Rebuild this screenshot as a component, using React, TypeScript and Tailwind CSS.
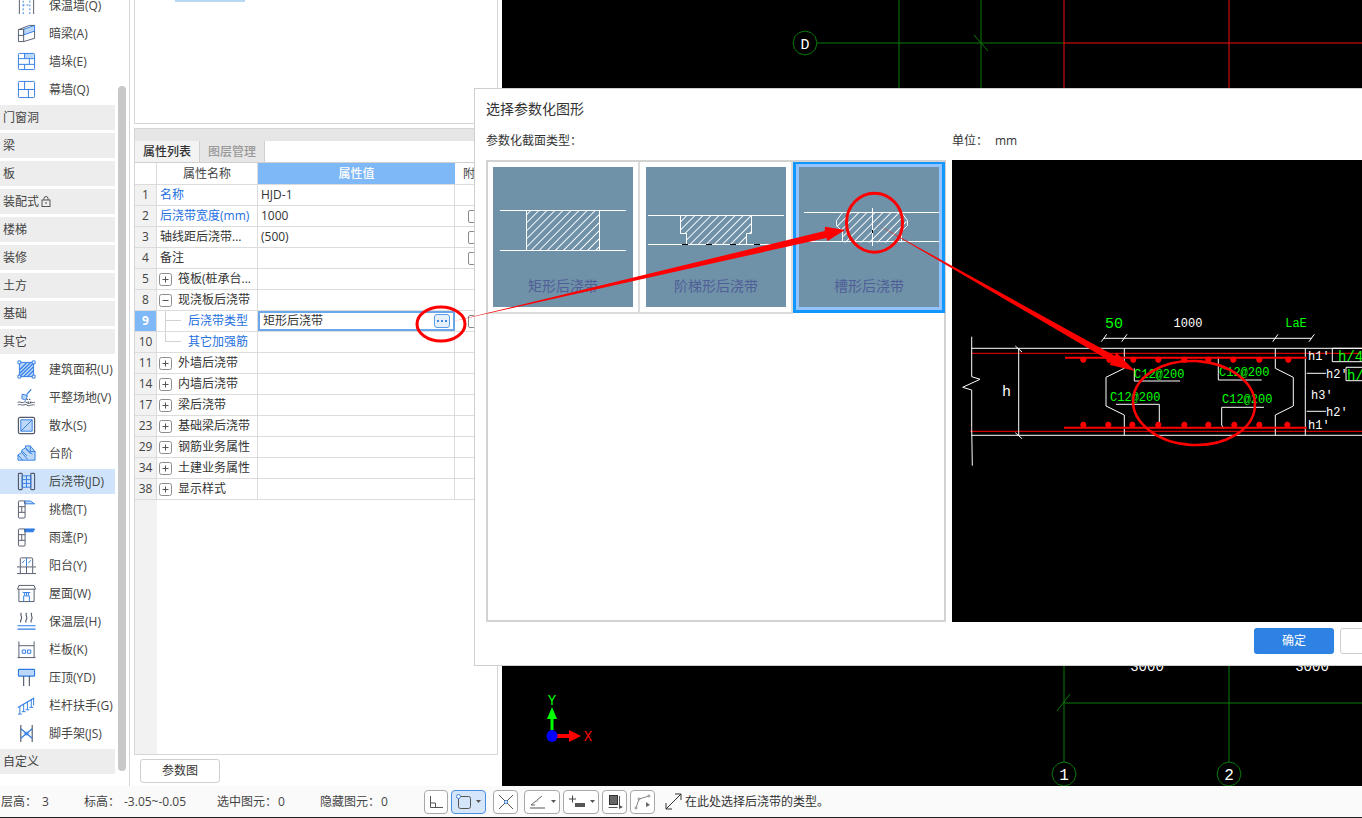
import React from 'react';

const B = '#2f7be5';
const S = '#525a6b';
const L = '#bcd8f8';

const Svg = ({ children }: { children: React.ReactNode }) => (
  <svg width="19" height="19" viewBox="0 0 20 20" fill="none" strokeWidth="1" className="shrink-0">
    {children}
  </svg>
);

const icons: Record<string, React.ReactNode> = {
  wall: (
    <Svg>
      <path d="M2.5 1v18M17.5 1v18" stroke={S} />
      <path d="M6.5 1v18M13.5 1v18" stroke={B} strokeDasharray="2 2" />
      <path d="M6 9.5h8" stroke={B} strokeDasharray="2 2" />
    </Svg>
  ),
  beam: (
    <Svg>
      <path d="M7 5.5 18.5 1.5v6L7 11.5z" fill={L} stroke={B} />
      <path d="M1.5 6 7 5.5M1.5 6v12.5H7l11.5-3.5V7.5" stroke={S} />
      <path d="M1.5 6 13 1.5h5.5M1.5 12h5.5M7 5.5v13" stroke={S} />
    </Svg>
  ),
  pier: (
    <Svg>
      <rect x="7.5" y="1.5" width="10" height="5" fill={L} />
      <path d="M1.5 2.500a1 1 0 0 1 1-1h15a1 1 0 0 1 1 1v15a1 1 0 0 1-1 1h-15a1 1 0 0 1-1-1zM1.500 7h17M1.500 13h17M8 1.500V7M13 7v6M8 13v5.500" stroke={B} />
    </Svg>
  ),
  curtain: (
    <Svg>
      <path d="M1.500 2.500a1 1 0 0 1 1-1h15a1 1 0 0 1 1 1v15a1 1 0 0 1-1 1h-15a1 1 0 0 1-1-1zM1.500 10h17M8 1.500V10M12 10v8.500" stroke={B} />
    </Svg>
  ),
  area: (
    <Svg>
      <rect x="2.500" y="2.500" width="15" height="15" fill={L} stroke={B} />
      <path d="M3 10 10 3M3 14 14 3M3 17.500 17.500 3M7 17.500 17.500 7M11 17.500l6.500-6.500" stroke={B} strokeWidth="1.300" />
      <path d="M1 1h3v3H1zM16 1h3v3h-3zM1 16h3v3H1zM16 16h3v3h-3z" fill="#fff" stroke={B} />
    </Svg>
  ),
  level: (
    <Svg>
      <path d="M15 1.500 10 7" stroke={B} strokeWidth="1.300" />
      <path d="M5.500 6.500 11 8l-2 5-4-2z" fill={L} stroke={B} />
      <path d="M10 12h4M11 15h4" stroke={S} strokeDasharray="1.500 1" strokeWidth="1.500" />
      <path d="M.5 15.500c2-2 3 0 5 0s3-2 5 0 3 0 5 0 2-1 3.500 0M1 18c2-1.500 3 0 5 0s3-1.500 4.500 0 3.500 0 5 0 2-1 3 0" stroke={S} />
    </Svg>
  ),
  apron: (
    <Svg>
      <rect x="1.500" y="1.500" width="17" height="17" rx="1.500" stroke={S} strokeWidth="1.300" />
      <path d="M4 4h12v12H4z" fill={L} stroke={B} />
      <path d="M4 16 16 4" stroke={B} />
    </Svg>
  ),
  step: (
    <Svg>
      <path d="M1 11.500 5 9V6.500L9 4V2h5l5 6v9H1z" fill={L} stroke={B} strokeLinejoin="round" />
      <path d="M1 11.500 6 17M5 9l6 7M9 4l7 7M14 2v6h5M5.500 7.500l5 5M9 5l5 5" stroke={B} />
    </Svg>
  ),
  pour: (
    <Svg>
      <rect x="1.500" y="1.500" width="4" height="17" rx=".8" stroke={S} strokeWidth="1.200" />
      <rect x="14.500" y="1.500" width="4" height="17" rx=".8" stroke={S} strokeWidth="1.200" />
      <path d="M5.500 4h9v12h-9zM5.500 8h9M5.500 12h9M10 4v12" stroke={B} />
    </Svg>
  ),
  eave: (
    <Svg>
      <path d="M8 1h6l4.500 3H8z" fill={L} stroke={B} />
      <rect x="1.500" y="1" width="7" height="18" rx="1" stroke={S} />
      <path d="M1.500 7h7M1.500 13h7M5 7v6" stroke={S} />
    </Svg>
  ),
  canopy: (
    <Svg>
      <path d="M8 1h10.500L17 4H8z" fill={B} stroke={B} />
      <rect x="1.500" y="1" width="7" height="18" rx="1" stroke={S} />
      <path d="M1.500 7h7M1.500 13h7M5 7v6" stroke={S} />
    </Svg>
  ),
  balcony: (
    <Svg>
      <path d="M3.500 11V3a1 1 0 0 1 1-1h11a1 1 0 0 1 1 1v8" stroke={S} />
      <path d="M10 2v9" stroke={B} />
      <path d="M5.500 7.500 8 4.500M12 7.500l2.500-3" stroke={B} />
      <path d="M0 11.500h20M0 18.500h20M3.500 11.500v7M10 11.500v7M16.500 11.500v7" stroke={S} />
    </Svg>
  ),
  roof: (
    <Svg>
      <path d="M2 1.500h16l1.500 4H.5z" stroke={S} />
      <path d="M2 5.500v13h16v-13" stroke={S} />
      <path d="M7 18.500v-6h6v6M6 9h8M8 9v3M12 9v3M10 9v3" stroke={B} />
    </Svg>
  ),
  heat: (
    <Svg>
      <path d="M4.500 1c-2 2.500 2 4-.2 7-.8 1.100-.8 2-.3 3M10 1c-2 2.500 2 4-.2 7-.8 1.100-.8 2-.3 3M15.500 1c-2 2.500 2 4-.2 7-.8 1.100-.8 2-.3 3" stroke={S} strokeWidth="1.200" />
      <path d="M.5 14.500h19M.5 18h19" stroke={B} strokeWidth="1.200" />
    </Svg>
  ),
  rail: (
    <Svg>
      <path d="M2 1.500V18.500M18 1.500v17M.5 18.500h19" stroke={S} />
      <path d="M2 6h16" stroke={S} />
      <path d="M5.500 10.500h3.500v3.500H5.500zM11 10.500h3.500v3.500H11z" stroke={B} />
    </Svg>
  ),
  coping: (
    <Svg>
      <rect x="1.500" y="1.500" width="17" height="7" rx=".5" fill={L} stroke={B} strokeWidth="1.200" />
      <path d="M7 8.500v10.500M13 8.500v10.500" stroke={S} strokeWidth="1.200" />
    </Svg>
  ),
  handrail: (
    <Svg>
      <path d="M1 12 18 2" stroke={B} strokeWidth="1.200" />
      <path d="M3 11v8M7 8.500v8M11 6.500v8M15 4v8M17.500 2v8M1 19h4M5 16.500h4M9 14.500h4M13 12h4" stroke={B} />
    </Svg>
  ),
  scaffold: (
    <Svg>
      <path d="M4 1v18M16 1v18" stroke={S} strokeWidth="1.200" />
      <path d="M4 5 16 15M16 5 4 15" stroke={B} strokeWidth="1.300" />
      <path d="M6.500 10 10 7.500l3.500 2.500L10 12.500z" fill={B} opacity=".5" />
    </Svg>
  ),
};

const Item = ({ icon, label, active }: { icon: string; label: string; active?: boolean }) => (
  <div className={`mb-[3px] flex h-[25px] items-center pl-[17px] ${active ? 'bg-[#cfe4fb]' : ''}`}>
    {icons[icon]}
    <span className="ml-[13px] whitespace-nowrap text-[12px] text-[#444]">{label}</span>
  </div>
);

const Head = ({ children }: { children: React.ReactNode }) => (
  <div className="mb-[3px] flex h-[25px] items-center bg-[#ededed] pl-[3px] text-[12px] text-[#444]">{children}</div>
);

type RowP = {
  i: number;
  name: string;
  value?: string;
  blue?: boolean;
  tree?: '+' | '-' | 'child' | 'last';
  check?: boolean;
  sel?: boolean;
};

const rows: RowP[] = [
  { i: 1, name: '名称', value: 'HJD-1', blue: true },
  { i: 2, name: '后浇带宽度(mm)', value: '1000', blue: true, check: true },
  { i: 3, name: '轴线距后浇带...', value: '(500)', check: true },
  { i: 4, name: '备注', check: true },
  { i: 5, name: '筏板(桩承台...', tree: '+' },
  { i: 8, name: '现浇板后浇带', tree: '-' },
  { i: 9, name: '后浇带类型', value: '矩形后浇带', blue: true, tree: 'child', check: true, sel: true },
  { i: 10, name: '其它加强筋', blue: true, tree: 'last' },
  { i: 11, name: '外墙后浇带', tree: '+' },
  { i: 14, name: '内墙后浇带', tree: '+' },
  { i: 17, name: '梁后浇带', tree: '+' },
  { i: 23, name: '基础梁后浇带', tree: '+' },
  { i: 29, name: '钢筋业务属性', tree: '+' },
  { i: 34, name: '土建业务属性', tree: '+' },
  { i: 38, name: '显示样式', tree: '+' },
];

const Toggle = ({ t }: { t: '+' | '-' }) => (
  <svg width="13" height="13" viewBox="0 0 13 13" fill="none" className="mr-[6px] shrink-0">
    <rect x=".5" y=".5" width="12" height="12" rx="2" stroke="#8d8d8d" />
    <path d={t === '+' ? 'M3.500 6.500h6M6.500 3.500v6' : 'M3.500 6.500h6'} stroke="#555" />
  </svg>
);

const Row = ({ r }: { r: RowP }) => (
  <div className="flex h-[21px] border-b border-[#dcdcdc] text-[12px] text-[#333]">
    <div
      className={`flex w-[22px] shrink-0 items-center justify-center border-r border-[#dcdcdc] ${
        r.sel ? 'bg-[#7fb8f6] font-bold text-white' : 'bg-[#f2f2f2] text-[#444]'
      }`}
    >
      {r.i}
    </div>
    <div className={`relative flex w-[101px] shrink-0 items-center overflow-hidden whitespace-nowrap border-r border-[#dcdcdc] ${r.tree === 'child' || r.tree === 'last' ? 'pl-[31px]' : r.tree ? 'pl-[2px]' : 'pl-[3px]'} ${r.blue ? 'text-[#2470e0]' : ''}`}>
      {(r.tree === '+' || r.tree === '-') && <Toggle t={r.tree} />}
      {(r.tree === 'child' || r.tree === 'last') && (
        <span className="absolute left-[8px] top-0 h-[10px] w-[16px] border-b border-l border-[#d2d2d2]" />
      )}
      {r.tree === 'child' && <span className="absolute bottom-0 left-[8px] h-[11px] border-l border-[#d2d2d2]" />}
      {r.name}
    </div>
    <div
      className={`relative flex w-[197px] shrink-0 items-center ${
        r.sel ? 'border-2 border-[#6aa6ea] pl-[3px]' : 'border-r border-[#dcdcdc] pl-[3px]'
      }`}
    >
      {r.value}
      {r.sel && (
        <div className="absolute right-[3px] top-[1px] flex h-[14px] w-[16px] items-center justify-center rounded-[3px] border border-[#5a9de8] bg-[#e6f0fb]">
          <svg width="10" height="2" viewBox="0 0 10 2"><path d="M0 0h2v2H0zM4 0h2v2H4zM8 0h2v2H8z" fill="#3f86dc" /></svg>
        </div>
      )}
    </div>
    <div className="flex flex-1 items-center pl-[13px]">
      {r.check && <span className="h-[13px] w-[13px] rounded-[2px] border border-[#8a8a8a] bg-white" />}
    </div>
  </div>
);

const Hatch = ({ id }: { id: string }) => (
  <defs>
    <pattern id={id} width="5.700" height="5.700" patternUnits="userSpaceOnUse" patternTransform="rotate(45)">
      <line x1="0" y1="0" x2="0" y2="6" stroke="#fff" strokeWidth="1.200" shapeRendering="crispEdges" />
    </pattern>
  </defs>
);

const W = { stroke: '#fff', strokeWidth: 1, fill: 'none' };

const Card = ({ label, w, sel, children }: { label: string; w: string; sel?: boolean; children: React.ReactNode }) => (
  <div
    className={`shrink-0 ${w} ${
      sel
        ? 'h-[151px] border-[3px] border-t-2 border-[#1296ff] pl-[3px] pt-[3px]'
        : 'h-[152px] border-b-2 border-r-2 border-[#dcdcdc] pt-[5px]'
    }`}
  >
    <div className={`relative flex h-[140px] w-[140px] flex-col items-center bg-[#6f92a9] ${sel ? 'outline-[3px] outline-[#93c4ff]' : ''}`}>
      <svg width="140" height="100" viewBox="0 0 140 100" fill="none">{children}</svg>
      <span className="mt-[9px] text-[14px] leading-[20px] text-[#4f5f96]">{label}</span>
    </div>
  </div>
);

const poly = (cx: number, cy: number, rx: number, ry: number, n = 12) =>
  Array.from({ length: n }, (_, k) => {
    const a = (k / n) * Math.PI * 2;
    return `${(cx + rx * Math.cos(a)).toFixed(1)},${(cy + ry * Math.sin(a)).toFixed(1)}`;
  }).join(' ');

const Mono = 'font-["Liberation_Mono",monospace]';

const Preview = () => {
  const px = (x: number) => 950 + x / 3;
  const py = (y: number) => 290 + y / 3;
  const top = [400, 478, 550, 625, 703, 775, 850, 928, 1015];
  const bot = [400, 475, 547, 625, 703, 775, 853, 928, 1012];
  const seg = (d: number[][]) => d.map((p, i) => `${i ? 'L' : 'M'}${px(p[0]).toFixed(1)} ${py(p[1]).toFixed(1)}`).join(' ');
  return (
    <svg className="h-[462px] w-[410px] bg-black" viewBox="952 160 410 462" fill="none">
      <path d={seg([[65, 175], [1236, 175]])} {...W} />
      <path d={seg([[65, 436], [1236, 436]])} {...W} />
      <path d={seg([[65, 190], [1236, 190]])} stroke="#f00" />
      <path d={seg([[60, 424], [1236, 424]])} stroke="#f00" />
      <path d={seg([[65, 140], [65, 260], [90, 268], [38, 292], [65, 300], [65, 412], [67, 527]])} {...W} />
      <path d={seg([[206, 175], [206, 436]])} {...W} />
      <path d={seg([[196, 168], [216, 186]])} {...W} />
      <path d={seg([[196, 428], [216, 446]])} {...W} />
      <path d={seg([[523, 175], [523, 235], [468, 262], [468, 348], [523, 375], [523, 436]])} {...W} />
      <path d={seg([[976, 175], [976, 235], [1030, 262], [1030, 348], [976, 375], [976, 436]])} {...W} />
      <path d={seg([[462, 145], [1085, 145]])} {...W} />
      {[462, 523, 976, 1085].map((x) => (
        <path key={x} d={seg([[x - 8, 155], [x + 8, 133]])} {...W} />
      ))}
      <path d={seg([[553, 235], [553, 273], [690, 273]])} {...W} />
      <path d={seg([[805, 200], [805, 270], [935, 270]])} {...W} />
      <path d={seg([[498, 343], [628, 343], [628, 400]])} {...W} />
      <path d={seg([[942, 352], [815, 352], [815, 405], [822, 416]])} {...W} />
      <path d={seg([[1066, 175], [1066, 436]])} {...W} />
      <path d={seg([[1070, 250], [1128, 250]])} {...W} />
      <path d={seg([[1070, 364], [1128, 364]])} {...W} />
      <path d={seg([[1147, 215], [1147, 175], [1236, 175]])} {...W} />
      <path d={seg([[1147, 215], [1236, 215]])} {...W} />
      <path d={seg([[1188, 272], [1188, 232], [1236, 232]])} {...W} />
      <path d={seg([[1188, 272], [1236, 272]])} {...W} />
      <path d={seg([[345, 203], [1070, 203]])} stroke="#f00" strokeWidth="2" />
      <path d={seg([[342, 413], [1070, 413]])} stroke="#f00" strokeWidth="2" />
      {top.map((x) => (
        <polygon key={x} points={poly(px(x), py(209), 3.200, 3.200, 8)} fill="#f00" />
      ))}
      {bot.map((x) => (
        <polygon key={x} points={poly(px(x), py(404), 3.200, 3.200, 8)} fill="#f00" />
      ))}
      <g className={`${Mono} font-light`}>
        <text x="1114" y="328" textAnchor="middle" fontSize="15" fill="#0f0">50</text>
        <text x="1188" y="327" textAnchor="middle" fontSize="12" fill="#fff">1000</text>
        <text x="1296" y="327" textAnchor="middle" fontSize="12" fill="#0f0">LaE</text>
        <text x="1134" y="378" fontSize="12" fill="#0f0">C12@200</text>
        <text x="1219" y="376" fontSize="12" fill="#0f0">C12@200</text>
        <text x="1110" y="401" fontSize="12" fill="#0f0">C12@200</text>
        <text x="1222" y="403" fontSize="12" fill="#0f0">C12@200</text>
        <text x="1002" y="396" fontSize="15" fill="#fff">h</text>
        <text x="1308" y="360" fontSize="12" fill="#fff">h1'</text>
        <text x="1326" y="378" fontSize="12" fill="#fff">h2'</text>
        <text x="1311" y="399" fontSize="12" fill="#fff">h3'</text>
        <text x="1326" y="416" fontSize="12" fill="#fff">h2'</text>
        <text x="1308" y="429" fontSize="12" fill="#fff">h1'</text>
        <text x="1338" y="361" fontSize="14" fill="#0f0">h/4</text>
        <text x="1347" y="380" fontSize="14" fill="#0f0">h/</text>
      </g>
    </svg>
  );
};

const Btn = ({ w, sel, children }: { w: string; sel?: boolean; children: React.ReactNode }) => (
  <div className={`flex h-[24px] shrink-0 items-center justify-center rounded-[4px] border ${w} ${sel ? 'border-[#4a90e2] bg-[#d6e6fa]' : 'border-[#a8a8a8] bg-white'}`}>
    {children}
  </div>
);

const Caret = () => (
  <svg width="5" height="3" viewBox="0 0 5 3" className="ml-[4px]"><path d="M0 0h5L2.500 3z" fill="#555" /></svg>
);

export default function App() {
  return (
    <div className={`relative h-[818px] w-[1362px] overflow-hidden bg-white font-['Open_Sans','Noto_Sans_CJK_SC',sans-serif]`}>
      <div className="flex h-[786px]">
        {/* sidebar */}
        <div className="flex h-full w-[130px] shrink-0 overflow-hidden border-r border-[#d6d6d6]">
          <div className="-mt-[7px] w-[115px] shrink-0">
            <Item icon="wall" label="保温墙(Q)" />
            <Item icon="beam" label="暗梁(A)" />
            <Item icon="pier" label="墙垛(E)" />
            <Item icon="curtain" label="幕墙(Q)" />
            <Head>门窗洞</Head>
            <Head>梁</Head>
            <Head>板</Head>
            <Head>
              装配式
              <svg width="10" height="11" viewBox="0 0 10 11" fill="none" className="ml-[2px]">
                <rect x="1" y="4" width="8" height="6.500" stroke="#555" />
                <path d="M3 4V2.500a2 2 0 0 1 4 0V4M5 6v2" stroke="#555" />
              </svg>
            </Head>
            <Head>楼梯</Head>
            <Head>装修</Head>
            <Head>土方</Head>
            <Head>基础</Head>
            <Head>其它</Head>
            <Item icon="area" label="建筑面积(U)" />
            <Item icon="level" label="平整场地(V)" />
            <Item icon="apron" label="散水(S)" />
            <Item icon="step" label="台阶" />
            <Item icon="pour" label="后浇带(JD)" active />
            <Item icon="eave" label="挑檐(T)" />
            <Item icon="canopy" label="雨蓬(P)" />
            <Item icon="balcony" label="阳台(Y)" />
            <Item icon="roof" label="屋面(W)" />
            <Item icon="heat" label="保温层(H)" />
            <Item icon="rail" label="栏板(K)" />
            <Item icon="coping" label="压顶(YD)" />
            <Item icon="handrail" label="栏杆扶手(G)" />
            <Item icon="scaffold" label="脚手架(JS)" />
            <Head>自定义</Head>
          </div>
          <div className="ml-[3px] mt-[86px] h-[685px] w-[8px] rounded-[4px] bg-[#c8c8c8]" />
        </div>

        {/* middle */}
        <div className="ml-[4px] flex w-[364px] shrink-0 flex-col">
          <div className="h-[124px] shrink-0 border border-t-0 border-[#d6d6d6] pl-[40px]">
            <div className="h-[2px] w-[70px] bg-[#b8d7f2]" />
          </div>
          <div className="mt-[4px] flex h-[627px] flex-col border border-[#d6d6d6]">
            <div className="h-[12px] shrink-0 bg-[#e6e6e6]" />
            <div className="flex h-[22px] shrink-0 border-b border-[#d0d0d0] text-[12px] font-medium">
              <div className="flex w-[65px] items-center justify-center border-r border-[#d0d0d0] bg-[#f3f3f3] text-[#333]">属性列表</div>
              <div className="flex w-[65px] items-center justify-center border-r border-[#d0d0d0] bg-[#e6e6e6] text-[#9a9a9a]">图层管理</div>
            </div>
            <div className="flex h-[22px] shrink-0 border-b border-[#dcdcdc] text-[12px] text-[#444]">
              <div className="w-[22px] border-r border-[#dcdcdc]" />
              <div className="flex w-[101px] items-center justify-center border-r border-[#dcdcdc]">属性名称</div>
              <div className="flex w-[197px] items-center justify-center bg-[#7fb8f6] font-medium text-white">属性值</div>
              <div className="flex flex-1 items-center pl-[8px]">附加</div>
            </div>
            {rows.map((r) => (
              <Row key={r.i} r={r} />
            ))}
            <div className="w-[22px] flex-1 bg-[#f2f2f2]" />
          </div>
          <div className="pl-[6px] pt-[4px]">
            <div className="flex h-[24px] w-[80px] items-center justify-center rounded-[3px] border border-[#d0d0d0] text-[12px] text-[#333]">参数图</div>
          </div>
        </div>

        {/* canvas */}
        <div className="ml-[4px] h-full flex-1 bg-black">
          <svg className="h-full w-full" viewBox="502 0 860 786" fill="none">
            <path d="M899 0v88M981 0v88M817 43h247" stroke="#0a7a0a" />
            <path d="M1064 0v88M1229 0v88M1064 43h298" stroke="#f01010" />
            <path d="M974 35l14 16" stroke="#0a7a0a" />
            <polygon points={poly(805, 43, 12, 12)} stroke="#0a7a0a" />
            <path d="M1064 666v96M1229 666v96M1064 703h298M1057 711l13-17" stroke="#0a7a0a" />
            <polygon points={poly(1064, 774, 12, 12)} stroke="#0a7a0a" />
            <polygon points={poly(1229, 774, 12, 12)} stroke="#0a7a0a" />
            <g className={Mono}>
              <text x="805" y="49" textAnchor="middle" fontSize="15" fill="#fff">D</text>
              <text x="1064" y="780" textAnchor="middle" fontSize="16" fill="#fff">1</text>
              <text x="1229" y="780" textAnchor="middle" fontSize="16" fill="#fff">2</text>
              <text x="1147" y="671" textAnchor="middle" fontSize="14" fill="#fff">3000</text>
              <text x="1312" y="671" textAnchor="middle" fontSize="14" fill="#fff">3000</text>
              <text x="552" y="705" textAnchor="middle" fontSize="14" fill="#0f0">Y</text>
              <text x="588" y="741" textAnchor="middle" fontSize="14" fill="#f00">X</text>
            </g>
            <path d="M552 730v-16" stroke="#0f0" strokeWidth="3" />
            <path d="M552 707l5 12h-10z" fill="#0f0" />
            <path d="M556 736h15" stroke="#f00" strokeWidth="4" />
            <path d="M581 736l-12-6v12z" fill="#f00" />
            <ellipse cx="552" cy="736" rx="5.500" ry="6" fill="#00f" />
          </svg>
        </div>
      </div>

      {/* status bar */}
      <div className="flex h-[31px] items-center bg-[#fafafa] pl-[1px] text-[12px] text-[#444]">
        <span className="w-[41px] shrink-0">层高：</span>
        <span className="w-[42px] shrink-0">3</span>
        <span className="w-[40px] shrink-0">标高：</span>
        <span className="w-[93px] shrink-0">-3.05~-0.05</span>
        <span className="w-[61px] shrink-0">选中图元：</span>
        <span className="w-[42px] shrink-0">0</span>
        <span className="w-[61px] shrink-0">隐藏图元：</span>
        <span className="w-[43px] shrink-0">0</span>
        <Btn w="w-[24px]">
          <svg width="16" height="14" viewBox="0 0 16 14" fill="none"><path d="M2.500 1v11.500H15M2.500 8h5v4.500" stroke="#555" /></svg>
        </Btn>
        <div className="w-[3px] shrink-0" />
        <Btn w="w-[35px]" sel>
          <svg width="16" height="16" viewBox="0 0 16 16" fill="none">
            <rect x="2.500" y="2.500" width="12" height="12" rx="2" stroke="#555" />
            <circle cx="2.500" cy="2.500" r="2" fill="#fff" stroke="#3f86dc" />
          </svg>
          <Caret />
        </Btn>
        <div className="w-[7px] shrink-0" />
        <Btn w="w-[25px]">
          <svg width="18" height="18" viewBox="0 0 18 18" fill="none">
            <path d="M2 2l14 14M16 2 2 16" stroke="#555" />
            <circle cx="9" cy="9" r="1.500" fill="#fff" stroke="#3f86dc" />
          </svg>
        </Btn>
        <div className="w-[6px] shrink-0" />
        <Btn w="w-[36px]">
          <svg width="18" height="16" viewBox="0 0 18 16" fill="none">
            <path d="M2 11 13 2M2 11h4" stroke="#666" />
            <path d="M1 14h15" stroke="#aaa" strokeWidth="2" />
            <circle cx="8" cy="7" r="1" fill="#bbb" />
          </svg>
          <Caret />
        </Btn>
        <div className="w-[3px] shrink-0" />
        <Btn w="w-[36px]">
          <svg width="18" height="16" viewBox="0 0 18 16" fill="none">
            <path d="M1 5h7M4.500 1.500v7" stroke="#444" />
            <rect x="7" y="9" width="10" height="4" fill="#555" />
          </svg>
          <Caret />
        </Btn>
        <div className="w-[3px] shrink-0" />
        <Btn w="w-[25px]">
          <svg width="18" height="18" viewBox="0 0 18 18" fill="none">
            <rect x="3.500" y="2.500" width="8" height="9" fill="#666" stroke="#333" />
            <path d="M2.500 14.500h9M13.500 3v10" stroke="#555" />
            <path d="M13 12l4 2-4 2z" fill="#555" />
          </svg>
        </Btn>
        <div className="w-[3px] shrink-0" />
        <Btn w="w-[25px]">
          <svg width="18" height="18" viewBox="0 0 18 18" fill="none">
            <path d="M2 15 5 6l10-3" stroke="#888" />
            <path d="M12 9l4 3-4 2z" fill="#666" />
            <circle cx="2" cy="15" r="1" fill="#fff" stroke="#888" />
            <circle cx="5" cy="6" r="1" fill="#fff" stroke="#888" />
            <circle cx="15" cy="3" r="1" fill="#fff" stroke="#888" />
          </svg>
        </Btn>
        <svg width="17" height="17" viewBox="0 0 17 17" fill="none" className="ml-[10px] shrink-0">
          <path d="M1 16 16 1M10 1h6v6M1 10v6h6" stroke="#333" />
        </svg>
        <span className="ml-[3px] whitespace-nowrap text-[#333]">在此处选择后浇带的类型。</span>
      </div>
      <div className="h-px bg-[#222]" />

      {/* dialog */}
      <div className="absolute left-[474px] top-[88px] h-[578px] w-[888px] overflow-hidden border border-r-0 border-[#cfcfcf] bg-white pl-[11px]">
        <div className="flex h-[38px] items-center text-[14px] text-[#333]">选择参数化图形</div>
        <div className="flex h-[33px] items-center pb-[5px] text-[12px] text-[#333]">
          <span className="w-[466px]">参数化截面类型：</span>
          <span className="w-[43px]">单位：</span>
          <span>mm</span>
        </div>
        <div className="flex h-[462px] w-[876px]">
          <div className="h-[462px] w-[460px] shrink-0 border-2 border-[#d2d2d2]">
            <div className="flex">
              <Card label="矩形后浇带" w="w-[152px] pl-[5px]">
                <Hatch id="h1" />
                <rect x="33.500" y="43.500" width="73" height="40" fill="url(#h1)" />
                <path d="M7 43.500h126M7 83.500h126M33.500 43.500v40M106.500 43.500v40" {...W} />
              </Card>
              <Card label="阶梯形后浇带" w="w-[153px] pl-[6px]">
                <Hatch id="h2" />
                <path d="M34.500 48.500h71v18h-5v11h-60v-11h-6z" fill="url(#h2)" />
                <path d="M2 48.500h136M2 77.500h136M34.500 48.500v18h6v11M105.500 48.500v18h-5v11" {...W} />
                <path d="M36 77.500h6M60 77.500h6M84 77.500h6M108 77.500h6" stroke="#000" />
              </Card>
              <Card label="槽形后浇带" w="w-[152px]" sel>
                <Hatch id="h3" />
                <path d="M43.500 45.500h59v4l6 6v4l-6 6v10h-59v-10l-6-6v-4l6-6z" fill="url(#h3)" />
                <path d="M5 45.500h135M5 74.500h135M43.500 45.500l-6 8v5l6 6v10M102.500 45.500l6 8v5l-6 6v10M73.500 41v38" {...W} />
                <path d="M73.500 63v3" stroke="#000" />
              </Card>
            </div>
          </div>
          <div className="ml-[6px] h-[462px] w-[410px] shrink-0">
            <Preview />
          </div>
        </div>
        <div className="flex gap-[6px] pl-[768px] pt-[6px]">
          <div className="flex h-[26px] w-[80px] shrink-0 items-center justify-center rounded-[3px] bg-[#2d82e3] text-[12px] text-white">确定</div>
          <div className="h-[26px] w-[80px] shrink-0 rounded-[3px] border border-[#cfcfcf] bg-white" />
        </div>
      </div>

      {/* red annotations */}
      <svg className="pointer-events-none absolute inset-0 h-full w-full" viewBox="0 0 1362 818" fill="none">
        <ellipse cx="441" cy="324" rx="24" ry="17" stroke="#f00" strokeWidth="3" />
        <ellipse cx="874.500" cy="222.700" rx="28" ry="29.500" stroke="#f00" strokeWidth="3" />
        <ellipse cx="1194" cy="403" rx="61" ry="42" stroke="#f00" strokeWidth="2.500" transform="rotate(3 1194 403)" />
        <polygon points="450,322 824.700,231 825,226.700 845,230 827.500,241 826.300,238" fill="#f00" />
        <polygon points="878,225 1114.700,355.700 1116.400,352.600 1135,371 1109.600,364.800 1111.300,361.700" fill="#f00" />
      </svg>
    </div>
  );
}
